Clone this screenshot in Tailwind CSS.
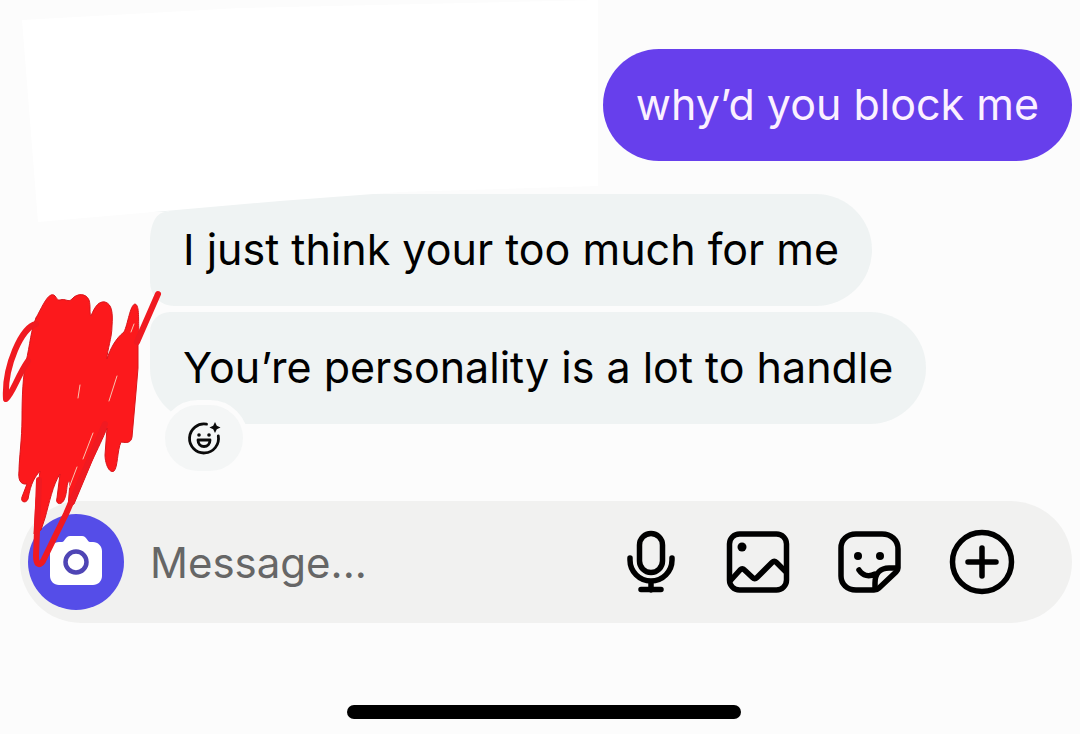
<!DOCTYPE html>
<html lang="en">
<head>
  <meta charset="UTF-8">
  <meta name="viewport" content="width=device-width, initial-scale=1">
  <title>Chat</title>
  <script src="https://cdn.jsdelivr.net/npm/@tailwindcss/browser@4"></script>
</head>
<body class="bg-[#fcfcfc] font-['Inter',sans-serif] text-black">
  <main class="relative min-h-screen flex flex-col overflow-hidden">

    <!-- messages -->
    <section class="flex flex-col pt-[49px] pl-[150px] pr-2 text-[43px] leading-[110px]">
      <p class="self-end rounded-full bg-[#673fec] px-[33px] pb-[2px] text-[#fbf0ff] whitespace-nowrap">why’d you block me</p>
      <p class="self-start mt-[33px] rounded-l-[24px] rounded-r-[56px] bg-[#eff3f3] px-[33px] pb-[2px] whitespace-nowrap">I just think your too much for me</p>
      <div class="relative self-start mt-[6px]">
        <p class="rounded-tl-[20px] rounded-bl-[56px] rounded-r-[56px] bg-[#eff3f3] px-[33px] pb-[2px] whitespace-nowrap">You’re personality is a lot to handle</p>
        <button type="button" aria-label="Add reaction" class="absolute left-[10px] -bottom-[52px] w-[88px] h-[76px] rounded-full border-5 border-[#fcfcfc] bg-[#f4f6f6] flex items-center justify-center">
          <svg class="w-9 h-9" viewBox="0 0 36 36" fill="none" stroke="#0a0a0a" stroke-width="2.800" stroke-linecap="round">
            <path d="M20.500 4.200A14.500 14.500 0 1 0 32.300 16"/>
            <path d="M12 20h12c0 4-2.500 6.500-6 6.500S12 24 12 20z" stroke-linejoin="round"/>
            <circle cx="13" cy="15" r="1.800" fill="#0a0a0a" stroke="none"/>
            <circle cx="23" cy="15" r="1.800" fill="#0a0a0a" stroke="none"/>
            <path d="M29 2l1.800 3.700 3.700 1.800-3.700 1.800L29 13l-1.800-3.700-3.700-1.800 3.700-1.800z" fill="#0a0a0a" stroke="none"/>
          </svg>
        </button>
      </div>
    </section>

    <!-- composer -->
    <form class="mt-[77px] ml-5 mr-2 h-[122px] rounded-full bg-[#f1f1f0] flex items-center pl-2 pr-[57px]">
      <button type="button" aria-label="Camera" class="shrink-0 w-24 h-24 rounded-full bg-[#554de8] flex items-center justify-center">
        <svg class="w-[54px] h-[54px]" viewBox="0 0 54 54">
          <path d="M10 7h3c3 0 3-6 8-6h12c5 0 5 6 8 6h3c5 0 9 4 9 9v25c0 5-4 9-9 9H10c-5 0-9-4-9-9V16c0-5 4-9 9-9z" fill="#fff"/>
          <circle cx="27" cy="27" r="10.500" fill="none" stroke="#4f45b5" stroke-width="4.500"/>
        </svg>
      </button>
      <input type="text" aria-label="Message" placeholder="Message..." class="flex-1 min-w-0 ml-[26px] text-[42px] placeholder:text-[#666] outline-none">
      <div class="flex items-center gap-[46px]">
        <button type="button" aria-label="Voice message">
          <svg class="w-[66px] h-[66px]" viewBox="0 0 66 66" fill="none" stroke="#000" stroke-width="5.500" stroke-linecap="round">
            <rect x="26.500" y="4.500" width="23" height="39" rx="11.500"/>
            <path d="M17 29v2a21 21 0 0 0 42 0v-2M38 53v8M28 60.500h20"/>
          </svg>
        </button>
        <button type="button" aria-label="Photo">
          <svg class="w-[66px] h-[66px]" viewBox="0 0 66 66" fill="none" stroke="#000" stroke-width="5.500" stroke-linecap="round" stroke-linejoin="round">
            <rect x="4.500" y="5" width="57" height="56" rx="10"/>
            <path d="M6 51l9-10c1.500-1.500 3-1.500 4.500 0l8 7.500c1.500 1.500 3 1.500 4.500 0l15-15c1.500-1.500 3-1.500 4.500 0L60 42"/>
            <circle cx="17" cy="18" r="4.500" fill="#000" stroke="none"/>
          </svg>
        </button>
        <button type="button" aria-label="Sticker">
          <svg class="w-[66px] h-[66px]" viewBox="0 0 66 66" fill="none" stroke="#000" stroke-width="5.500" stroke-linecap="round" stroke-linejoin="round">
            <path d="M19 5h26c9 0 16 6 16 15v19c0 2-1 3-2 4L42 59c-1.500 1.500-3 2-5 2H19C10 61 4 55 4 47V19C4 11 10 5 19 5z"/>
            <path d="M38 60V54c0-10 6-15 14-15h8M22 41c4 6 10 7 16 4"/>
            <circle cx="21" cy="27" r="4" fill="#000" stroke="none"/>
            <circle cx="43" cy="27" r="4" fill="#000" stroke="none"/>
          </svg>
        </button>
        <button type="button" aria-label="More">
          <svg class="w-[66px] h-[66px]" viewBox="0 0 66 66" fill="none" stroke="#000" stroke-width="5.500" stroke-linecap="round">
            <circle cx="33" cy="33" r="29.500"/>
            <path d="M33 19v28M19 33h28"/>
          </svg>
        </button>
      </div>
    </form>

    <!-- home indicator -->
    <div class="mt-[82px] mb-[15px] self-center w-[394px] h-[14px] ml-2 rounded-full bg-black"></div>

    <!-- brush marks drawn over the chat -->
    <svg class="absolute left-0 top-0 w-[610px] h-[600px] pointer-events-none" viewBox="0 0 610 600" fill="none" stroke-linecap="round" stroke-linejoin="round">
      <path d="M22 20L240 8 598 0V186L400 192 280 201 165 211 38 222z" fill="#fff"/>
      <path d="M149 212H170C157 210 151 222 150 240H149z" fill="#fcfcfc"/>
      <g fill="#fc191c" stroke="#d9151b" stroke-width="1">
        <path d="M36 318C41 309 46 297 51 295C56 293 56 301 60 300C66 298 68 303 72 299C77 293 86 293 89 300C91 306 89 313 91 316C95 306 99 301 105 302C112 304 113 313 112 326C112 338 107 350 107 359C110 349 116 338 124 332C128 324 130 305 135 304C140 305 138 322 139 332L138 345V368L136 392L132 437C131 443 127 443 121 442C117 451 118 467 114 471C109 474 105 463 105 455L107 428C103 438 98 448 92 461L74 504L68 507L70 482C66 479 68 493 64 500C61 506 55 504 57 498L60 474C53 484 49 504 45 518L41 530L34 534L36 500L40 471C35 477 31 482 28 499C26 504 20 502 22 497L27 484C20 485 18 479 19 471C19 460 22 438 22 419C22 395 23 376 26 362C30 345 31 329 36 318z"/>
      </g>
      <path d="M36 324C22 327 4 366 6 399C13 393 18 375 28 361M158 294L137 342M39 480L36 556C36 564 39 567 43 561L66 514L105 424" stroke="#f01a21" stroke-width="6"/>
      <path d="M117 376L109 401M93 433L83 459M80 385L78 398M69 488L77 467M131 332l3-8" stroke="#f9c3b0" stroke-width="1"/>
    </svg>
  </main>
</body>
</html>
